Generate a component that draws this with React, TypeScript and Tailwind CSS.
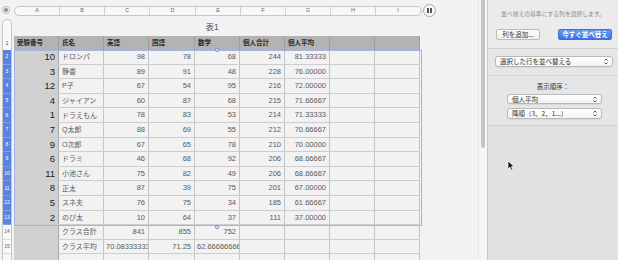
import React from 'react';

const colW = ['w-[45px]', 'w-[45px]', 'w-[45px]', 'w-[46px]', 'w-[45px]', 'w-[45px]', 'w-[45px]', 'w-[45px]', 'w-[45px]'];
const letters = ['A', 'B', 'C', 'D', 'E', 'F', 'G', 'H', 'I'];

const header = ['受験番号', '氏名', '英語', '国語', '数学', '個人合計', '個人平均', '', ''];

const body: string[][] = [
  ['10', 'ドロンパ', '98', '78', '68', '244', '81.33333', '', ''],
  ['3', '静香', '89', '91', '48', '228', '76.00000', '', ''],
  ['12', 'P子', '67', '54', '95', '216', '72.00000', '', ''],
  ['4', 'ジャイアン', '60', '87', '68', '215', '71.66667', '', ''],
  ['1', 'ドラえもん', '78', '83', '53', '214', '71.33333', '', ''],
  ['7', 'Q太郎', '88', '69', '55', '212', '70.66667', '', ''],
  ['9', 'O次郎', '67', '65', '78', '210', '70.00000', '', ''],
  ['6', 'ドラミ', '46', '68', '92', '206', '68.66667', '', ''],
  ['11', '小池さん', '75', '82', '49', '206', '68.66667', '', ''],
  ['8', '正太', '87', '39', '75', '201', '67.00000', '', ''],
  ['5', 'スネ夫', '76', '75', '34', '185', '61.66667', '', ''],
  ['2', 'のび太', '10', '64', '37', '111', '37.00000', '', ''],
  ['', 'クラス合計', '841', '855', '752', '', '', '', ''],
  ['', 'クラス平均', '70.08333333', '71.25', '62.66666666', '', '', '', ''],
  ['', '', '', '', '', '', '', '', ''],
];

function Chevrons() {
  return (
    <svg width="4" height="7" viewBox="0 0 4 7" className="shrink-0">
      <path d="M0.5 2.5 L2 1 L3.5 2.5" fill="none" stroke="#444" strokeWidth="0.9" />
      <path d="M0.5 4.5 L2 6 L3.5 4.5" fill="none" stroke="#444" strokeWidth="0.9" />
    </svg>
  );
}

function Select({ label, cls }: { label: string; cls: string }) {
  return (
    <div className={`${cls} flex items-center justify-between rounded-[3px] border border-[#b9b9b9] bg-gradient-to-b from-[#ffffff] to-[#f3f3f3] px-[4px] shadow-[0_0.5px_0.5px_rgba(0,0,0,0.12)]`}>
      <span className="text-[6.5px] leading-none text-[#333]">{label}</span>
      <Chevrons />
    </div>
  );
}

export default function App() {
  return (
    <div className="flex h-[260px] w-[618px] overflow-hidden bg-[#f2f2f2] font-['Liberation_Sans','Noto_Sans_CJK_JP',sans-serif]">
      {/* canvas */}
      <div className="relative h-full w-[478px] shrink-0">
        {/* column header bar */}
        <div className="flex h-[19px] items-start pt-[6px]">
          <div className="ml-[2px] flex h-[8px] w-[8px] items-center justify-center rounded-full border border-[#b8b8b8] bg-[#f8f8f8]">
            <div className="h-[4px] w-[4px] rounded-full bg-[#8a8a8a]" />
          </div>
          <div className="ml-[4px] flex h-[10px] w-[408px] overflow-hidden rounded-full border border-[#c6c6c6] bg-[#f8f8f8]">
            {letters.map((l, i) => (
              <div
                key={l}
                className={`${colW[i]} flex h-full shrink-0 items-center justify-center border-r border-[#d2d2d2] text-[5.5px] leading-none text-[#666]`}
              >
                {l}
              </div>
            ))}
          </div>
          <div className="-mt-[2px] ml-[1px] flex h-[13px] w-[13px] items-center justify-center gap-[1.5px] rounded-full border border-[#a9a9a9] bg-[#f6f6f6]">
            <div className="h-[5px] w-[1.3px] bg-[#555]" />
            <div className="h-[5px] w-[1.3px] bg-[#555]" />
          </div>
        </div>

        <div className="flex">
          {/* row gutter */}
          <div className="ml-[2px] flex w-[10px] flex-col overflow-hidden rounded-t-[5px] border-x border-t border-[#c6c6c6] bg-[#f8f8f8]">
            <div className="h-[16px] shrink-0" />
            <div className="flex h-[14px] shrink-0 items-center justify-center text-[5.5px] text-[#555]">1</div>
            {body.map((_, i) => {
              const n = i + 2;
              const sel = n <= 13;
              return (
                <div
                  key={n}
                  className={`flex h-[14.6px] shrink-0 items-center justify-center border-b text-[5px] leading-none ${
                    sel ? 'border-[#7f9ee8] bg-[#5a82e2] text-white' : 'border-[#dcdcdc] text-[#666]'
                  }`}
                >
                  {n <= 15 ? n : ''}
                </div>
              );
            })}
          </div>

          {/* table */}
          <div className="ml-[2px] flex flex-col">
            <div className="flex h-[17px] items-center justify-center pr-[10px] text-[8.5px] text-[#555]">表1</div>
            <div className="flex h-[14px] bg-[#b3b3b3]">
              {header.map((h, i) => (
                <div
                  key={i}
                  className={`${colW[i]} flex h-full shrink-0 items-center border-r border-[#9e9e9e] px-[3px] text-[6.5px] font-bold leading-none text-[#2a2a2a]`}
                >
                  {h}
                </div>
              ))}
            </div>
            {body.map((r, ri) => (
              <div key={ri} className="flex h-[14.6px] border-b border-[#cdcdcd]">
                {r.map((c, ci) => {
                  const isA = ci === 0;
                  const isB = ci === 1;
                  const wrap = ri === 13 && (ci === 2 || ci === 4);
                  return (
                    <div
                      key={ci}
                      className={`${colW[ci]} flex h-full shrink-0 items-center overflow-hidden whitespace-nowrap border-r ${
                        isA ? 'justify-end border-[#a8a8a8] bg-[#d1d1d1] pr-[3px] text-[9.5px] text-[#222]' : ''
                      } ${isB ? 'justify-start border-[#c4c4c4] pl-[3px] text-[7px] text-[#5a5a5a]' : ''} ${
                        !isA && !isB ? (wrap ? 'justify-start border-[#c4c4c4] pl-[2px] text-[7.5px] text-[#5a5a5a]' : 'justify-end border-[#c4c4c4] pr-[3px] text-[7.5px] text-[#5a5a5a]') : ''
                      } leading-none`}
                    >
                      {c}
                    </div>
                  );
                })}
              </div>
            ))}
          </div>
        </div>

        {/* selection overlay */}
        <div className="pointer-events-none absolute left-[14px] top-[50px] h-[176px] w-[408px] border-[1.5px] border-[#a7b3e4]" />
        <div className="absolute left-[215px] top-[48px] h-[4px] w-[4px] rounded-full border border-[#6f86d6] bg-white" />
        <div className="absolute left-[215px] top-[225px] h-[4px] w-[4px] rounded-full border border-[#6f86d6] bg-white" />
      </div>

      {/* scrollbar */}
      <div className="flex h-full w-[9px] shrink-0 justify-center border-l border-[#e6e6e6] bg-[#f6f6f6]">
        <div className="h-[148px] w-[4px] rounded-b-full bg-[#c3c3c3]" />
      </div>

      {/* right panel */}
      <div className="relative flex h-full flex-1 flex-col border-l border-[#c8c8c8] bg-[#e2e2e2] font-['Noto_Sans_CJK_JP',sans-serif]">
        <div className="flex h-[49px] shrink-0 flex-col border-b border-[#d0d0d0] bg-[#ebebeb]">
          <div className="mt-[10px] text-center text-[5.8px] leading-[8px] text-[#8a8a8a]">並べ替えの基準にする列を選択します。</div>
          <div className="mt-[11px] flex">
            <div className="ml-[8px] flex h-[11px] w-[44px] items-center justify-center rounded-[2px] border border-[#bcbcbc] bg-gradient-to-b from-[#fdfdfd] to-[#f0f0f0] text-[6.5px] leading-none text-[#333]">
              列を追加...
            </div>
            <div className="ml-[18px] flex h-[11px] w-[54px] items-center justify-center rounded-[2px] border border-[#3e6fd8] bg-gradient-to-b from-[#6b9af0] to-[#3f72e4] text-[6.5px] font-bold leading-none text-white">
              今すぐ並べ替え
            </div>
          </div>
        </div>
        <div className="flex h-[27px] shrink-0 items-start border-b border-[#d4d4d4] bg-[#e6e6e6] pt-[7px]">
          <Select label="選択した行を並べ替える" cls="ml-[7px] h-[11px] w-[118px]" />
        </div>
        <div className="flex h-[50px] shrink-0 flex-col items-start border-b border-[#d0d0d0] bg-[#e6e6e6]">
          <div className="mt-[6px] w-full text-center text-[6.5px] leading-[8px] text-[#333]">表示順序：</div>
          <Select label="個人平均" cls="ml-[19px] mt-[4px] h-[10px] w-[95px]" />
          <Select label="降順（3、2、1...）" cls="ml-[19px] mt-[4px] h-[11px] w-[95px]" />
        </div>
        <svg className="absolute left-[19px] top-[160px]" width="8" height="11" viewBox="0 0 8 11">
          <path d="M1 1 L1 9 L3 7.2 L4.5 10.2 L5.8 9.6 L4.4 6.7 L7 6.6 Z" fill="#111" stroke="#fff" strokeWidth="0.7" />
        </svg>
      </div>
    </div>
  );
}
